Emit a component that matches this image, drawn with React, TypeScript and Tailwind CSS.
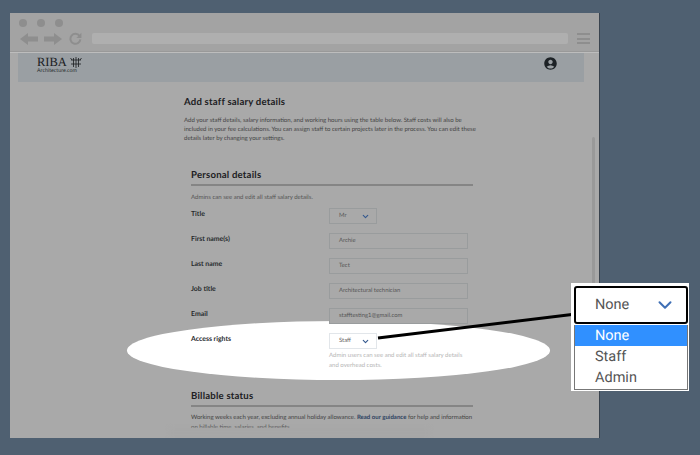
import React from 'react';
import { ChevronDown } from 'lucide-react';
import { MdAccountCircle } from 'react-icons/md';

const heading = "font-['Lato',sans-serif] text-[9.6px] leading-[14px] font-bold tracking-[0.2px] text-[#1d2023]";
const label = "w-[138px] pt-px text-[6.9px] leading-[10px] font-bold text-[#26292c]";

function Field({ name, value }: { name: string; value: string }) {
  return (
    <div className="flex h-[25px]">
      <div className={label}>{name}</div>
      <div className="flex h-[16px] w-[139px] items-center border border-[#999c9d] bg-[#a9a9a9] pl-[9px] text-[5.9px] text-[#555]">
        {value}
      </div>
    </div>
  );
}

function Select({ value, white }: { value: string; white?: boolean }) {
  return (
    <div className={`flex h-[16px] w-[48px] items-center justify-between border pr-[6px] pl-[9px] text-[5.9px] ${white ? 'border-[#e2e6ea] bg-white text-[#666]' : 'border-[#999c9d] bg-[#a9a9a9] text-[#555]'}`}>
      <span>{value}</span>
      <ChevronDown className="h-[9px] w-[9px] text-[#35598f]" strokeWidth={3} />
    </div>
  );
}

export default function App() {
  return (
    <div className="relative h-[455px] w-[700px] overflow-hidden bg-[#4f6071] pt-[13px] pl-[10px] font-['Lato',sans-serif] [text-rendering:geometricPrecision]">
      <div className="relative flex h-[425px] w-[590px] flex-col overflow-hidden border-r border-[#39434e] bg-[#a9a9a9]">
        {/* highlight behind the access rights row */}
        <div className="absolute top-[308px] left-[117px] h-[59px] w-[423px] rounded-[50%] bg-white" />

        {/* Browser chrome */}
        <div className="relative h-[39px] shrink-0 border-b border-[#999] bg-[#a3a3a3]">
          <div className="flex gap-[10px] pt-[6px] pl-[9px]">
            <span className="h-[8px] w-[8px] rounded-full bg-[#8e8e8e]" />
            <span className="h-[8px] w-[8px] rounded-full bg-[#8e8e8e]" />
            <span className="h-[8px] w-[8px] rounded-full bg-[#8e8e8e]" />
          </div>
          <div className="mt-[5px] flex items-center pl-[10px]">
            <svg width="18" height="12" viewBox="0 0 18 12" className="text-[#8e8e8e]">
              <path d="M0 6 L8 0 V3.5 H18 V8.5 H8 V12 Z" fill="currentColor" />
            </svg>
            <svg width="18" height="12" viewBox="0 0 18 12" className="ml-[6px] text-[#8e8e8e]">
              <path d="M18 6 L10 0 V3.5 H0 V8.5 H10 V12 Z" fill="currentColor" />
            </svg>
            <svg width="13" height="13" viewBox="0 0 13 13" className="ml-[7px] text-[#8e8e8e]">
              <path d="M10.6 4 A5 5 0 1 0 11.4 7.4" fill="none" stroke="currentColor" strokeWidth="2" />
              <path d="M12.4 0.8 V6 H7.4 Z" fill="currentColor" />
            </svg>
            <div className="ml-[10px] h-[11px] w-[476px] rounded-[2px] bg-[#afafaf]" />
            <div className="ml-[9px] flex w-[13px] flex-col gap-[2.5px]">
              <span className="h-[2px] bg-[#8e8e8e]" />
              <span className="h-[2px] bg-[#8e8e8e]" />
              <span className="h-[2px] bg-[#8e8e8e]" />
            </div>
          </div>
        </div>
        <div className="h-px shrink-0 bg-[#bdbdbd]" />

        {/* Site header */}
        <div className="relative ml-[8px] flex h-[29px] w-[566px] shrink-0 items-start justify-between bg-[#9a9fa3] pr-[26px] pl-[19px]">
          <div>
            <div className="flex items-center pt-[3px]">
              <span className="font-['Liberation_Serif',serif] text-[12.5px] leading-[12px] text-[#1b1d1f]">RIBA</span>
              <svg width="12" height="11" viewBox="0 0 12 11" className="ml-[3px] text-[#1b1d1f]">
                <path d="M1 3 H11 M1 7 H11 M3.5 1 V10 M6 0 V11 M8.5 1 V10 M0.5 1 L2 3 M11.5 1 L10 3" stroke="currentColor" strokeWidth="0.8" fill="none" />
              </svg>
            </div>
            <div className="text-[5.3px] leading-[7px] text-[#2c2f31]">Architecture.com</div>
          </div>
          <MdAccountCircle className="mt-[3px] text-[#1d2226]" size={15} />
        </div>

        {/* Page */}
        <div className="relative ml-[174px] w-[300px] shrink-0 pt-[14px]">
          <h1 className={heading}>Add staff salary details</h1>
          <p className="mt-[6px] w-[300px] text-[6.05px] leading-[9px] text-[#444]">
            Add your staff details, salary information, and working hours using the table below. Staff costs will also be
            <br />
            included in your fee calculations. You can assign staff to certain projects later in the process. You can edit these
            <br />
            details later by changing your settings.
          </p>

          <div className="mt-[26px] ml-[7px] w-[282px]">
            <h2 className={heading}>Personal details</h2>
            <div className="mt-px h-[2px] bg-[#858585]" />
            <p className="mt-[7px] text-[6.05px] leading-[9px] text-[#555]">Admins can see and edit all staff salary details.</p>
            <div className="mt-[6px]">
              <div className="flex h-[25px]">
                <div className={label}>Title</div>
                <Select value="Mr" />
              </div>
              <Field name="First name(s)" value="Archie" />
              <Field name="Last name" value="Tect" />
              <Field name="Job title" value="Architectural technician" />
              <Field name="Email" value="stafftesting1@gmail.com" />
              <div className="flex">
                <div className={label}>Access rights</div>
                <div>
                  <Select value="Staff" white />
                  <p className="mt-[2px] w-[140px] text-[6.05px] leading-[10px] text-[#b5b5b5]">
                    Admin users can see and edit all staff salary details and overhead costs.
                  </p>
                </div>
              </div>
            </div>
            <h2 className={`mt-[19px] ${heading}`}>Billable status</h2>
            <div className="mt-px h-[2px] bg-[#858585]" />
            <p className="mt-[6px] w-[290px] text-[6.05px] leading-[10px] text-[#444]">
              Working weeks each year, excluding annual holiday allowance. <b className="text-[#2c3f5f]">Read our guidance</b> for help and information
              <br />
              on billable time, salaries, and benefits.
            </p>
          </div>
        </div>

        {/* Scrollbar */}
        <div className="absolute top-[124px] right-[4px] h-[200px] w-[3px] rounded-sm bg-[#999]" />
        {/* Fade at the bottom of the page */}
        <div className="absolute right-0 bottom-0 left-0 h-[10px] bg-[#a9a9a9]" />
        <div className="absolute right-[170px] bottom-0 left-[160px] h-[10px] bg-[#a7a7a7] blur-[2px]" />
      </div>

      {/* Annotation */}
      <svg width="700" height="455" className="absolute top-0 left-0">
        <line x1="378" y1="338" x2="576" y2="314" stroke="black" strokeWidth="3" />
      </svg>
      <div className="absolute top-[283px] left-[571px] h-[108px] w-[118px] bg-white pt-[3px] pr-px pl-[3px] font-['Roboto',sans-serif] text-[14.5px] text-[#555]">
        <div className="flex h-[38px] items-center justify-between rounded-[3px] border-2 border-black pr-[10px] pl-[19px]">
          <span>None</span>
          <ChevronDown className="h-[22px] w-[22px] text-[#3f6fb5]" strokeWidth={2.2} />
        </div>
        <div className="mt-px border-x border-b border-[#777] pb-px leading-[21px]">
          <div className="bg-[#3090ff] pl-[20px] text-white">None</div>
          <div className="pl-[20px]">Staff</div>
          <div className="pl-[20px]">Admin</div>
        </div>
      </div>
    </div>
  );
}
